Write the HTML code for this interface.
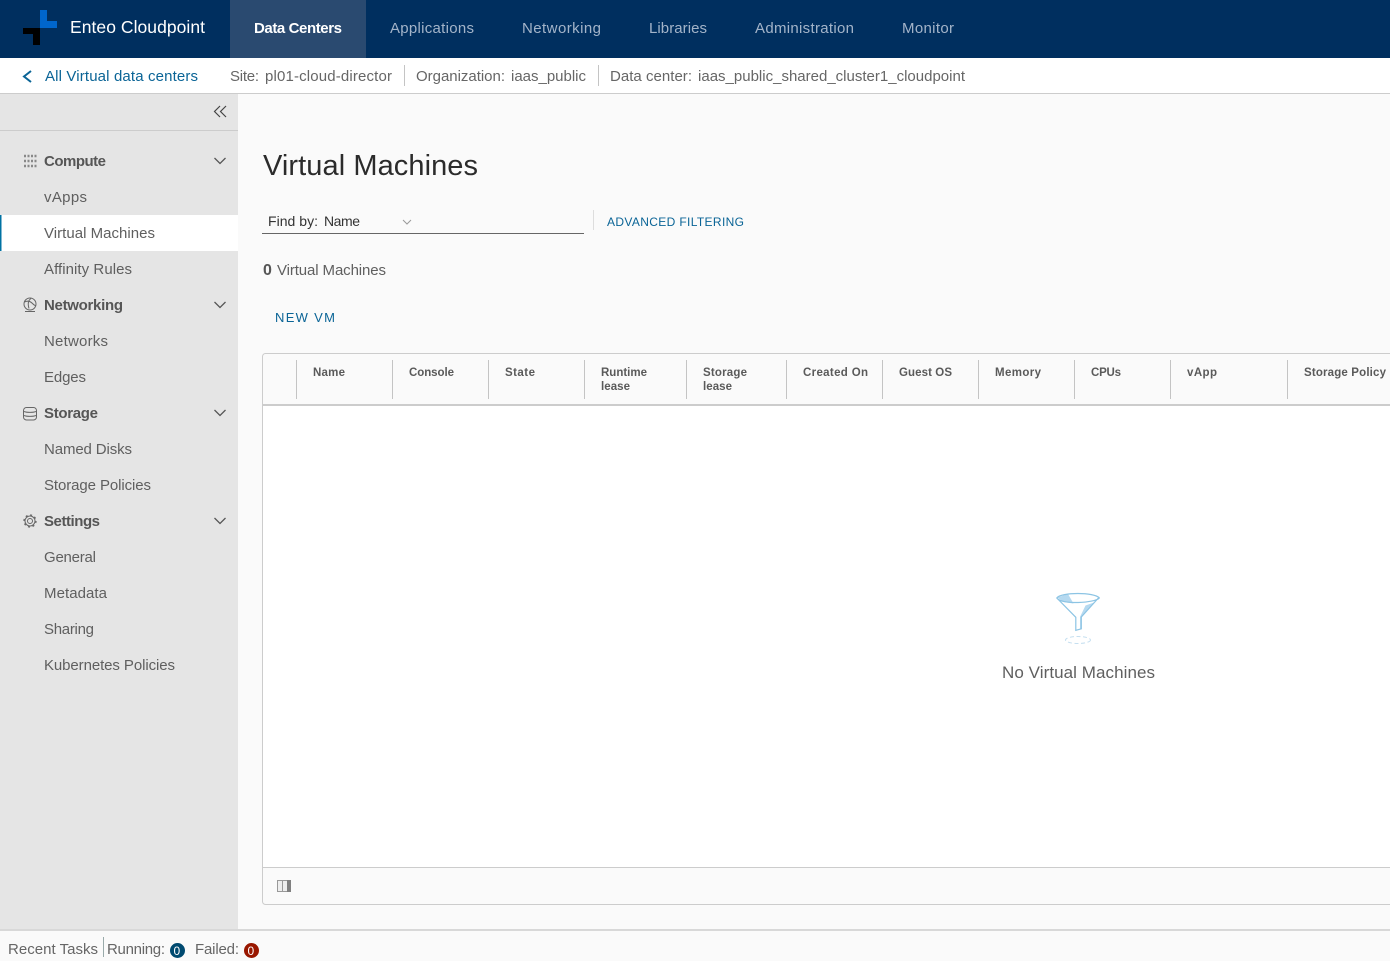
<!DOCTYPE html>
<html lang="en"><head><meta charset="utf-8"><title>Virtual Machines</title>
<style>
html,body{margin:0;padding:0;width:1390px;height:961px;overflow:hidden;background:#fafafa}
svg{display:block}
text{font-family:"Liberation Sans",sans-serif;font-size:15px;fill:#5f5f5f}
.n{font-size:15px;fill:#a3b4c9}
.s{fill:#666}
.b{font-weight:700;font-size:15px;fill:#565656}
.h{font-size:11.5px;font-weight:700;fill:#5a5a5a}
.l{fill:#0a6496}
.ic{fill:none;stroke:#666;stroke-width:1}
.sep{stroke:#c4c4c4;stroke-width:1}
</style></head><body>
<svg width="1390" height="961" viewBox="0 0 1390 961" xmlns="http://www.w3.org/2000/svg">
<rect width="1390" height="961" fill="#fafafa"/>
<!-- header -->
<rect width="1390" height="58" fill="#002f5f"/>
<rect x="230" width="136" height="58" fill="#2a4a70"/>
<rect x="40" y="10" width="7" height="18" fill="#0066cc"/><rect x="40" y="21" width="17" height="7" fill="#0066cc"/>
<rect x="23" y="28" width="17" height="6" fill="#000"/><rect x="33" y="28" width="7" height="17" fill="#000"/>
<text x="70" y="33" textLength="135" style="font-size:17.500px;fill:#fff">Enteo Cloudpoint</text>
<text x="254" y="33" textLength="88" style="font-weight:700;font-size:15px;fill:#fff">Data Centers</text>
<text class="n" x="390" y="33" textLength="84">Applications</text>
<text class="n" x="522" y="33" textLength="79">Networking</text>
<text class="n" x="649" y="33" textLength="58">Libraries</text>
<text class="n" x="755" y="33" textLength="99">Administration</text>
<text class="n" x="902" y="33" textLength="52">Monitor</text>
<!-- subbar -->
<rect y="58" width="1390" height="35" fill="#fff"/>
<rect y="93" width="1390" height="1" fill="#ccc"/>
<path d="M31 71l-7 5.500 7 5.500" fill="none" stroke="#0a6496" stroke-width="2"/>
<text class="l" x="45" y="81" textLength="153">All Virtual data centers</text>
<text class="s" x="230" y="81" textLength="29">Site:</text>
<text class="s" x="265" y="81" textLength="127">pl01-cloud-director</text>
<path class="sep" d="M404.500 65v21M598.500 65v21"/>
<text class="s" x="416" y="81" textLength="89">Organization:</text>
<text class="s" x="511" y="81" textLength="75">iaas_public</text>
<text class="s" x="610" y="81" textLength="82">Data center:</text>
<text class="s" x="698" y="81" textLength="267">iaas_public_shared_cluster1_cloudpoint</text>
<!-- sidebar -->
<rect y="94" width="238" height="836" fill="#e5e5e5"/>
<rect y="130" width="238" height="1" fill="#ccc"/>
<path d="M220 106l-5.500 5.500 5.500 5.500M226 106l-5.500 5.500 5.500 5.500" fill="none" stroke="#444" stroke-width="1.200"/>
<rect y="215" width="238" height="36" fill="#fff"/>
<rect y="215" width="1.500" height="36" fill="#0072a3"/>
<path d="M24 156h13M24 161h13M24 166h13" fill="none" stroke="#888" stroke-width="2.400" stroke-dasharray="2 1.500"/>
<circle class="ic" cx="30" cy="304" r="6"/><path class="ic" d="M24.500 302c3-1.500 6-.5 8 1.500 1 1 2 2 3 2M31 298.500c-3 2-3.500 5-2 10M25 311.500h10"/>
<g class="ic"><rect x="23.500" y="407.500" width="13" height="12.500" rx="3"/><path d="M24 411.500c3 1.200 9 1.200 12 0M24 415.500c3 1.200 9 1.200 12 0"/></g>
<circle class="ic" cx="30" cy="521" r="2.500"/><circle cx="30" cy="521" r="5" fill="none" stroke="#666" stroke-width="1"/><circle cx="30" cy="521" r="6" fill="none" stroke="#666" stroke-width="1.300" stroke-dasharray="2 2.700"/>
<path d="M214.500 158l5.500 5.500 5.500-5.500M214.500 302l5.500 5.500 5.500-5.500M214.500 410l5.500 5.500 5.500-5.500M214.500 518l5.500 5.500 5.500-5.500" fill="none" stroke="#565656" stroke-width="1.300"/>
<text class="b" x="44" y="166" textLength="62">Compute</text>
<text x="44" y="202" textLength="43">vApps</text>
<text x="44" y="238" textLength="111">Virtual Machines</text>
<text x="44" y="274" textLength="88">Affinity Rules</text>
<text class="b" x="44" y="310" textLength="79">Networking</text>
<text x="44" y="346" textLength="64">Networks</text>
<text x="44" y="382" textLength="42">Edges</text>
<text class="b" x="44" y="418" textLength="54">Storage</text>
<text x="44" y="454" textLength="88">Named Disks</text>
<text x="44" y="490" textLength="107">Storage Policies</text>
<text class="b" x="44" y="526" textLength="56">Settings</text>
<text x="44" y="562" textLength="52">General</text>
<text x="44" y="598" textLength="63">Metadata</text>
<text x="44" y="634" textLength="50">Sharing</text>
<text x="44" y="670" textLength="131">Kubernetes Policies</text>
<!-- main -->
<text x="263" y="175" textLength="215" style="font-size:29px;fill:#2b2b2b">Virtual Machines</text>
<text x="268" y="226" textLength="50" style="font-size:14px;fill:#333">Find by:</text>
<text x="324" y="226" textLength="36" style="font-size:14px;fill:#333">Name</text>
<path d="M403 220l4 4 4-4" fill="none" stroke="#999" stroke-width="1"/>
<rect x="262" y="233" width="322" height="1" fill="#666"/>
<path d="M593.500 210v20" stroke="#ddd"/>
<text class="l" x="607" y="226" textLength="137" style="font-size:12px">ADVANCED FILTERING</text>
<text class="b" x="263" y="275" textLength="9" style="font-size:16px">0</text>
<text x="277" y="275" textLength="109">Virtual Machines</text>
<text class="l" x="275" y="322" textLength="60" style="font-size:13px">NEW VM</text>
<!-- table -->
<path d="M1391 353.500H265.500a3 3 0 0 0-3 3V901.500a3 3 0 0 0 3 3H1391V867H263V405H1391z" fill="#fafafa"/>
<rect x="263" y="405" width="1127" height="462" fill="#fff"/>
<path d="M1391 353.500H265.500a3 3 0 0 0-3 3V901.500a3 3 0 0 0 3 3H1391" fill="none" stroke="#ccc"/>
<rect x="263" y="404" width="1127" height="2" fill="#ccc"/>
<rect x="263" y="867" width="1127" height="1" fill="#ccc"/>
<path class="sep" d="M296.500 360v39M392.500 360v39M488.500 360v39M584.500 360v39M686.500 360v39M786.500 360v39M882.500 360v39M978.500 360v39M1074.500 360v39M1170.500 360v39M1287.500 360v39"/>
<text class="h" x="313" y="376" textLength="32">Name</text>
<text class="h" x="409" y="376" textLength="45">Console</text>
<text class="h" x="505" y="376" textLength="30">State</text>
<text class="h" x="601" y="376" textLength="46">Runtime</text>
<text class="h" x="601" y="390" textLength="29">lease</text>
<text class="h" x="703" y="376" textLength="44">Storage</text>
<text class="h" x="703" y="390" textLength="29">lease</text>
<text class="h" x="803" y="376" textLength="65">Created On</text>
<text class="h" x="899" y="376" textLength="53">Guest OS</text>
<text class="h" x="995" y="376" textLength="46">Memory</text>
<text class="h" x="1091" y="376" textLength="30">CPUs</text>
<text class="h" x="1187" y="376" textLength="30">vApp</text>
<text class="h" x="1304" y="376" textLength="82">Storage Policy</text>
<!-- empty state -->
<path d="M1057.500 597.500l10.500-3.500 5.500 9.500-10-1.500zM1094 602.500l-8.500 3-5.500 11.500v12h1.500v-12z" fill="#b5d9f0"/>
<path d="M1056.800 598c4-6 38-6 42.500 0-4 5-38 7-42.500 0zM1056.800 598l19 19.300v13l5.500-1.500v-11.800l18-20" fill="none" stroke="#8cc4e4" stroke-width="1.200"/>
<ellipse cx="1078" cy="640" rx="12.500" ry="3.500" fill="none" stroke="#c5dff0" stroke-width="1" stroke-dasharray="4 2.500"/>
<text x="1002" y="678" textLength="153" style="font-size:17px">No Virtual Machines</text>
<!-- columns icon -->
<rect x="277.500" y="880.500" width="13" height="11" fill="#eee" stroke="#999"/>
<rect x="287" y="880" width="4" height="12" fill="#808080"/><path d="M282.500 880v12" stroke="#999"/>
<!-- footer -->
<rect y="930" width="1390" height="31" fill="#fafafa"/>
<rect y="929" width="1390" height="2" fill="#d8d8d8"/>
<text x="8" y="954" textLength="90" style="fill:#666">Recent Tasks</text>
<path d="M103.500 937v20" stroke="#9aa" stroke-width="1"/>
<text x="107" y="954" textLength="58" style="fill:#666">Running:</text>
<circle cx="177.500" cy="950.500" r="7.500" fill="#004a70"/>
<text x="173.500" y="955" textLength="8" style="font-size:12px;fill:#fff">0</text>
<text x="195" y="954" textLength="44" style="fill:#666">Failed:</text>
<circle cx="251.500" cy="950.500" r="7.500" fill="#991700"/>
<text x="247.500" y="955" textLength="8" style="font-size:12px;fill:#fff">0</text>
</svg>
</body></html>
